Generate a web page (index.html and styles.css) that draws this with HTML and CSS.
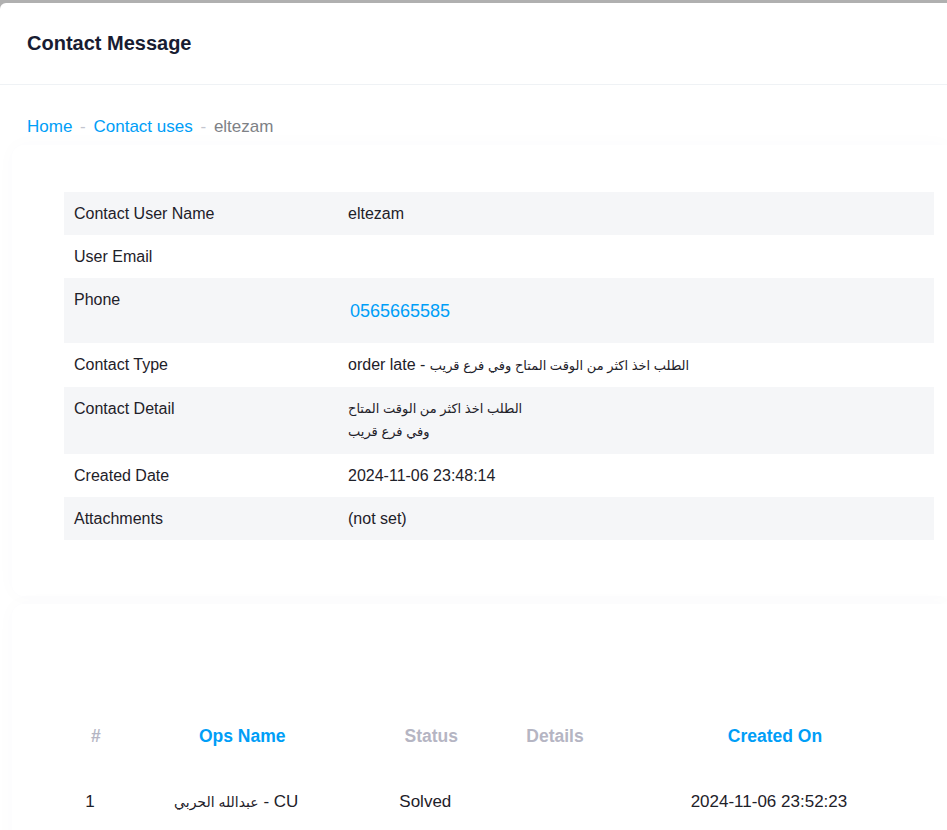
FILE: index.html
```html
<html>

<head>
	<meta charset="utf-8">
	<meta name="viewport" content="width=device-width, initial-scale=1">
	<title>Contact Message</title>
	<link rel="stylesheet" href="styles.css">
</head>

<body>
	<div class="page">
		<div class="page-header">
			<h1 class="page-title">Contact Message</h1>
		</div>

		<div class="breadcrumb">
			<a href="#">Home</a>
			<span class="sep">-</span>
			<a href="#">Contact uses</a>
			<span class="sep">-</span>
			<span class="current">eltezam</span>
		</div>

		<div class="card">
			<table class="detail-view">
				<tr>
					<th>Contact User Name</th>
					<td>eltezam</td>
				</tr>
				<tr>
					<th>User Email</th>
					<td></td>
				</tr>
				<tr>
					<th>Phone</th>
					<td><a class="phone-link" href="#">0565665585</a></td>
				</tr>
				<tr>
					<th>Contact Type</th>
					<td>order late - <span class="ar">الطلب اخذ اكثر من الوقت المتاح وفي فرع قريب</span></td>
				</tr>
				<tr>
					<th>Contact Detail</th>
					<td class="ar-block">الطلب اخذ اكثر من الوقت المتاح<br>وفي فرع قريب</td>
				</tr>
				<tr>
					<th>Created Date</th>
					<td>2024-11-06 23:48:14</td>
				</tr>
				<tr>
					<th>Attachments</th>
					<td>(not set)</td>
				</tr>
			</table>
		</div>

		<div class="card card-ops">
			<table class="ops-table">
				<colgroup>
					<col style="width: 52px">
					<col style="width: 242px">
					<col style="width: 138px">
					<col style="width: 110px">
					<col style="width: 332px">
				</colgroup>
				<thead>
					<tr>
						<th class="muted">#</th>
						<th><a href="#">Ops Name</a></th>
						<th class="muted">Status</th>
						<th class="muted">Details</th>
						<th><a href="#">Created On</a></th>
					</tr>
				</thead>
				<tbody>
					<tr>
						<td>1</td>
						<td><span class="ar-sm">عبدالله الحربي</span> - CU</td>
						<td>Solved</td>
						<td></td>
						<td>2024-11-06 23:52:23</td>
					</tr>
				</tbody>
			</table>
		</div>
	</div>
</body>

</html>
```

FILE: styles.css
```css
body {
	margin: 0;
	padding: 0;
	background-color: #b0b0b0;
	font-family: "Liberation Sans", "DejaVu Sans", sans-serif;
	color: #1e2129;
	overflow: hidden;
}

a {
	color: #009ef7;
	text-decoration: none;
}

.page {
	margin-top: 3px;
	min-height: calc(100vh - 3px);
	background-color: #fff;
	border-top-left-radius: 6px;
}

.page-header {
	height: 81px;
	display: flex;
	align-items: center;
	padding: 0 27px;
	border-bottom: 1px solid #eff2f5;
}

.page-title {
	margin: 0;
	font-size: 20px;
	font-weight: bold;
	color: #181c32;
}

.breadcrumb {
	padding: 32px 27px 0;
	font-size: 17px;
	line-height: 20px;
}

.breadcrumb .sep {
	color: #c4c6d0;
	margin: 0 3px;
}

.breadcrumb .current {
	color: #7e8186;
}

.card {
	margin: 8px 0 0 12px;
	padding: 47px 13px 56px 52px;
	background-color: #fff;
	border-radius: 12px 0 0 12px;
	box-shadow: 0 0 20px 0 rgba(76, 87, 125, 0.025);
}

/* detail view */
.detail-view {
	width: 870px;
	border-collapse: collapse;
	font-size: 16px;
	line-height: 19px;
}

.detail-view th,
.detail-view td {
	padding: 12px 10px;
	text-align: left;
	vertical-align: top;
	font-weight: normal;
}

.detail-view th {
	width: 254px;
}

.detail-view tr:nth-child(odd) {
	background-color: #f5f6f8;
}

.phone-link {
	display: block;
	margin: 11px 0 10px 2px;
	font-size: 18px;
	line-height: 20px;
}

.ar {
	font-size: 13px;
}

.detail-view td.ar-block {
	padding: 10px 10px 11px;
	font-size: 13px;
	line-height: 23px;
}

/* ops table */
.card-ops {
	margin-top: 8px;
	padding: 112px 13px 40px 52px;
}

.ops-table {
	table-layout: fixed;
	border-collapse: collapse;
	font-size: 17px;
	line-height: 20px;
}

.ops-table th {
	padding: 10px 8px 36px 20px;
	font-size: 17.5px;
	font-weight: bold;
	text-align: center;
}

.ops-table th.muted {
	color: #b5b5c3;
}

.ops-table td {
	padding: 10px 8px;
	text-align: center;
}

.ar-sm {
	font-size: 14px;
}
```
